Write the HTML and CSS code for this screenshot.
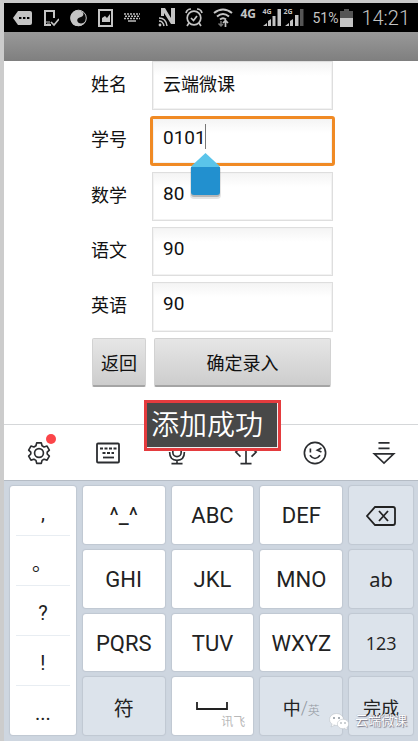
FILE: index.html
```html
<!DOCTYPE html>
<html lang="zh-CN">
<head>
<meta charset="utf-8">
<meta name="viewport" content="width=device-width">
<title>添加成绩</title>
<link rel="stylesheet" href="styles.css">
</head>
<body>
<div class="phone">
  <header class="status">
    <div class="status-left">
      <svg width="19" height="16" viewBox="0 0 19 16"><path fill="#c4c4c4" d="M5 1h12q2 0 2 2v10q0 2-2 2H5L0 8z"/><path d="M6 8h2.4M10 8h2.4M14 8h2.4" stroke="#000" stroke-width="2.2"/></svg>
      <svg width="16" height="18" viewBox="0 0 16 18" fill="none" stroke="#c4c4c4"><path stroke-width="2" d="M11 9V2H2v14h6"/><path stroke-width="1" d="M2 13h5M4 15h3"/><path stroke-width="1.7" d="M8 13l3 3 5-6"/></svg>
      <svg width="17" height="18" viewBox="0 0 17 18"><circle cx="8.500" cy="9" r="7.800" fill="#090909" stroke="#c4c4c4" stroke-width="1"/><path fill="#c4c4c4" d="M1 12C-1 5 4 0 10 1.500c3 1 4 3 3 5-1 1.500-3 1.500-4.500 2.500-2 1.500-1.500 4 .5 5 2.500 1 5 0 7-2-2 4-5 5-8 5-4 0-6-2-7-5z"/></svg>
      <svg width="15" height="18" viewBox="0 0 15 18"><path fill="none" stroke="#c4c4c4" stroke-width="2" d="M1 1h13v16H1z"/><path fill="#c4c4c4" d="M4 13V9l3-2 2 2 3-4v8z"/></svg>
      <svg width="16" height="9" viewBox="0 0 16 9" stroke="#bcbcbc"><path stroke-dasharray="2 1" stroke-width="1.5" d="M0 1h16M1 3.3h14M0 5.6h16"/><path d="M4 8h8" stroke-width="1.5"/></svg>
    </div>
    <div class="status-mid">
      <svg width="17" height="19" viewBox="0 0 17 19"><path fill="#c4c4c4" d="M3 8V0h4l6 10V0h4v16h-4L6 5v3z"/><path fill="none" stroke="#c4c4c4" stroke-width="1.5" d="M1 10q7 0 8 8M1 13q4 0 5 5"/><circle cx="2" cy="17" r="1.4" fill="#c4c4c4"/></svg>
      <svg width="18" height="19" viewBox="0 0 18 19" fill="none" stroke="#c4c4c4" stroke-width="1.7"><circle cx="9" cy="10" r="6.8"/><path d="M1 5q1-4 5-4M17 5q-1-4-5-4M4 15l-2 3M14 15l2 3M6 10l2.5 2.5L12 8"/></svg>
      <svg width="20" height="20" viewBox="0 0 20 20" fill="none" stroke="#c4c4c4" stroke-width="2"><path d="M1 5q9-7 18 0M4 8.500q6-5 12 0M7 11.500q3-2.500 6 0"/><path stroke="#777" stroke-width="1.5" d="M8 13v5M5.500 15.500L8 18l2-2"/><path stroke-width="1.7" d="M12.500 19v-6M10 15l2.500-2.500L15 15"/></svg>
    </div>
    <b class="net">4G</b>
    <div class="signals">
      <div class="signal"><b class="tag">4G</b><svg width="18" height="17" viewBox="0 0 18 17" fill="#c4c4c4"><path d="M0 17l4-3v3zM5 12l3-2v7H5zM9.500 7h3v10h-3zM14.500 0H18v17h-3.500z"/></svg></div>
      <div class="signal"><b class="tag">2G</b><svg width="20" height="17" viewBox="0 0 20 17" fill="#c4c4c4"><path d="M1 17l4-3v3zM6 12l3-2v7H6zM11 6h3.500v11H11z"/><path fill="#555" d="M16 0h3.500v17H16z"/></svg></div>
    </div>
    <span class="percent">51%</span>
    <svg class="battery" width="13" height="18" viewBox="0 0 13 18"><path fill="#555" d="M4 0h5v2h4v8H0V2h4z"/><path fill="#c4c4c4" d="M0 9h13v9H0z"/></svg>
    <time class="clock">14:21</time>
  </header>
  <div class="titlebar"></div>

  <main class="content">
    <form class="form">
      <label for="name">姓名</label>
      <input id="name" class="field" type="text" value="云端微课">
      <label for="sid">学号</label>
      <div class="active-cell">
        <input id="sid" class="field digits active" type="text" value="0101">
        <span class="caret"></span>
        <svg class="handle" width="34" height="48" viewBox="0 0 34 48"><path fill="#000" opacity=".1" d="M1 16h31v27q0 4-4 4H5q-4 0-4-4z"/><path fill="#000" opacity=".2" d="M2 16h29v26q0 3-3 3H5q-3 0-3-3z"/><path fill="#5ac4ea" d="M16.500 1l14 13v3H2.500v-3z"/><path fill="#2290cf" d="M2 15h29v25q0 3-3 3H5q-3 0-3-3z"/></svg>
      </div>
      <label for="math">数学</label>
      <input id="math" class="field digits" type="text" value="80">
      <label for="chinese">语文</label>
      <input id="chinese" class="field digits" type="text" value="90">
      <label for="english">英语</label>
      <input id="english" class="field digits" type="text" value="90">
      <div class="actions">
        <button class="btn" type="button">返回</button>
        <button class="btn wide" type="button">确定录入</button>
      </div>
    </form>
  </main>

  <nav class="tools">
    <button class="tool" aria-label="设置"><svg width="24" height="24" viewBox="0 0 26 26"><path d="M10.500 2h5l.8 3.200 2.200 1.300 3.200-1 2.500 4.300-2.300 2.300v2l2.300 2.300-2.500 4.300-3.200-1-2.200 1.300-.8 3.200h-5l-.8-3.200-2.200-1.300-3.200 1-2.500-4.300 2.300-2.300v-2L1.800 9.800l2.500-4.300 3.200 1 2.200-1.300z" stroke-linejoin="round"/><circle cx="13" cy="13" r="4.800"/></svg><i class="dot"></i></button>
    <button class="tool" aria-label="键盘"><svg width="26" height="26" viewBox="0 0 26 26"><rect x="2" y="3.500" width="22" height="19" rx="1"/><path stroke-dasharray="3 1.500" d="M5 8.500h17M7.500 13h11.500"/><path d="M8 17.500h11"/></svg></button>
    <button class="tool" aria-label="语音"><svg width="24" height="24" viewBox="0 0 26 26"><rect x="8.500" y="2" width="9" height="15" rx="4.500"/><path d="M5 12q0 9 8 9t8-9M13 21v3M7 24.500h12"/></svg></button>
    <button class="tool" aria-label="光标"><svg width="24" height="24" viewBox="0 0 26 26"><path d="M13 3v21M7 24.500h12M8 3h11M7 7l-5 5 5 5M19 7l5 5-5 5"/></svg></button>
    <button class="tool" aria-label="表情"><svg width="24" height="24" viewBox="0 0 26 26"><circle cx="13" cy="13" r="11.500"/><path d="M8 8v4.500M20 7.500l-4.500 2.500 4.500 2M7.500 15.500q5.500 7 11 0"/></svg></button>
    <button class="tool" aria-label="收起"><svg width="24" height="24" viewBox="0 0 26 26"><path d="M7 2h12M7 8h12M2.500 14h21L13 24z"/></svg></button>
  </nav>

  <section class="keyboard">
    <div class="marks">
      <button>,</button><button class="stop">。</button><button>?</button><button>!</button><button>...</button>
    </div>
    <button class="key">^_^</button>
    <button class="key">ABC</button>
    <button class="key">DEF</button>
    <button class="key soft" aria-label="删除"><svg width="30" height="20" viewBox="0 0 30 20"><path d="M9 1h18q2 0 2 2v14q0 2-2 2H9l-8-9zM13 5l9 10M22 5l-9 10"/></svg></button>
    <button class="key">GHI</button>
    <button class="key">JKL</button>
    <button class="key">MNO</button>
    <button class="key soft alt">ab</button>
    <button class="key">PQRS</button>
    <button class="key">TUV</button>
    <button class="key">WXYZ</button>
    <button class="key soft num">123</button>
    <button class="key soft symbol">符</button>
    <button class="key space" aria-label="空格"><svg width="32" height="10" viewBox="0 0 32 10"><path d="M1 0v7h30V0"/></svg><small>讯飞</small></button>
    <button class="key soft lang">中<small>/</small><small class="en">英</small></button>
    <button class="key soft done">完成</button>
  </section>

  <div class="toast" role="status">添加成功</div>
  <div class="watermark">
    <svg width="20" height="17" viewBox="0 0 20 17" stroke="#b4bac0" stroke-width=".5"><ellipse cx="7.500" cy="6.500" rx="7" ry="6" fill="#fff"/><path fill="#fff" d="M3 11l-1 3 4-2"/><ellipse cx="14" cy="11" rx="5.700" ry="4.800" fill="#fff"/><path fill="#fff" d="M15 15l3 2v-3"/><g fill="#8d969e" stroke="none"><circle cx="5" cy="5" r="1"/><circle cx="10" cy="5" r="1"/><circle cx="12" cy="10" r=".8"/><circle cx="16" cy="10" r=".8"/></g></svg>
    <span>云端微课</span>
  </div>
</div>
</body>
</html>
```
FILE: styles.css
```css
* { box-sizing: border-box; }

body {
  margin: 0;
  background: #fff;
  color: #111;
  font-family: Roboto, "Noto Sans CJK SC", sans-serif;
}

button, input { font: inherit; color: inherit; margin: 0; }
button { border: 0; padding: 0; background: none; }
svg { display: block; flex: none; }

.phone {
  position: relative;
  min-height: 100vh;
  display: flex;
  flex-direction: column;
  border-top: 3px solid #c8c8c8;
  border-left: 4px solid #ccc;
}

.status {
  height: 29px;
  background: #000;
  color: #c4c4c4;
  display: flex;
  align-items: center;
  padding: 0 8px 0 9px;
}
.status-left { display: flex; align-items: center; gap: 11px; }
.status-mid { display: flex; align-items: center; gap: 10px; margin-left: 18px; }
.net { font: bold 12px "Open Sans", sans-serif; margin: 0 auto 8px; }
.signals { display: flex; gap: 3px; margin-right: 8px; }
.signal { position: relative; }
.tag {
  position: absolute;
  top: -1px;
  left: -1px;
  font: bold 7px/7px "Open Sans", sans-serif;
}
.percent { font-size: 14px; width: 25px; margin-right: 3px; }
.clock { font-size: 20px; font-weight: 300; margin-left: 8px; }

.titlebar {
  height: 29px;
  background: linear-gradient(#999, #7f7f7f);
}

.content {
  height: 363px;
  display: flex;
  justify-content: center;
  align-items: flex-start;
  padding-left: 2px;
}
.form {
  width: 242px;
  height: 326px;
  display: grid;
  grid-template-columns: 61px 1fr;
  grid-template-rows: repeat(6, 1fr);
  row-gap: 6px;
  font-size: 18px;
  align-items: center;
}
.form label { padding-bottom: 5px; }
.field {
  width: 100%;
  height: 100%;
  border: 1px solid #dedede;
  border-radius: 0;
  background: linear-gradient(#f4f4f4, #fff 14px);
  box-shadow: inset 0 0 0 1px #f2f2f2;
  padding: 0 10px 6px;
  font-size: 18px;
  outline: 0;
}
.digits { font-size: 19px; }
.active-cell { position: relative; height: 100%; }
.active {
  position: absolute;
  inset: 0 -2px;
  width: calc(100% + 4px);
  border: 3px solid #f08a24;
  border-radius: 3px;
}
.caret {
  position: absolute;
  left: 53px;
  top: 8px;
  width: 1px;
  height: 25px;
  background: #777;
}
.handle { position: absolute; left: 37px; top: 36px; z-index: 1; }

.actions {
  grid-column: 1 / -1;
  height: 100%;
  display: flex;
  gap: 8px;
  padding: 0 2px 0 1px;
}
.btn {
  width: 54px;
  border-radius: 2px;
  background: linear-gradient(#e6e6e6, #cdcdcd);
  border: 1px solid #d2d2d2;
  border-bottom: 2px solid #a5a5a5;
}
.wide { flex: 1; }

.tools {
  height: 56px;
  border-top: 1px solid #d5d7d9;
  display: flex;
  background: #fff;
}
.tool {
  position: relative;
  flex: 1;
  display: flex;
  align-items: center;
  justify-content: center;
}
.tool svg { fill: none; stroke: #2b2d30; stroke-width: 1.8; }
.dot {
  position: absolute;
  left: 42px;
  top: 9px;
  width: 10px;
  height: 10px;
  border-radius: 50%;
  background: #fb4549;
}

.keyboard {
  flex: 1;
  background: #ced6e0;
  border-top: 1px solid #b5bcc5;
  padding: 5px 5px 6px 6px;
  display: grid;
  grid-template-columns: 66fr 82fr 82fr 82fr 64fr;
  grid-template-rows: repeat(4, 1fr);
  gap: 6px 7px;
  font-size: 22px;
  color: #222;
}
.marks, .key {
  min-width: 0;
  background: #fff;
  border-radius: 3px;
  box-shadow: 0 0 1px 1px #c0c8d2;
}
.marks {
  grid-row: 1 / -1;
  display: flex;
  flex-direction: column;
  padding: 0 6px;
  font-size: 20px;
}
.marks button { flex: 1; padding-top: 4px; }
.marks button + button { border-top: 1px solid #e8edf2; }
.marks .stop { text-align: left; padding-left: 16px; }
.key {
  position: relative;
  display: flex;
  align-items: center;
  justify-content: center;
  padding-top: 2px;
}
.key svg { fill: none; stroke: #222; stroke-width: 1.8; }
.key.soft { background: #dce3eb; }
.alt { font-family: "Noto Sans", sans-serif; font-size: 20px; }
.num { font-family: "Open Sans", sans-serif; font-size: 18px; }
.symbol { font-size: 20px; }
.lang, .done { font-size: 18px; }
.lang small { font-size: 18px; color: #9298a0; font-weight: 300; }
.lang .en { font-size: 12px; padding-top: 4px; }
.space small {
  position: absolute;
  right: 8px;
  bottom: 5px;
  font-size: 12px;
  line-height: 16px;
  color: #b8b8b8;
}

.toast {
  position: absolute;
  top: 397px;
  left: 50%;
  margin-left: -67px;
  border: 3px solid #e43b3e;
  background: #484848;
  box-shadow: inset -1px -1px #eee;
  color: #fff;
  font-size: 28px;
  font-weight: 350;
  line-height: 45px;
  padding: 0 15px 0 4px;
}

.watermark {
  position: absolute;
  right: 11px;
  bottom: 11px;
  display: flex;
  align-items: center;
  gap: 6px;
  font-size: 13px;
  line-height: 18px;
  color: #fff;
  text-shadow: 1px 1px 1px #778, 0 0 1px #889;
}
```
